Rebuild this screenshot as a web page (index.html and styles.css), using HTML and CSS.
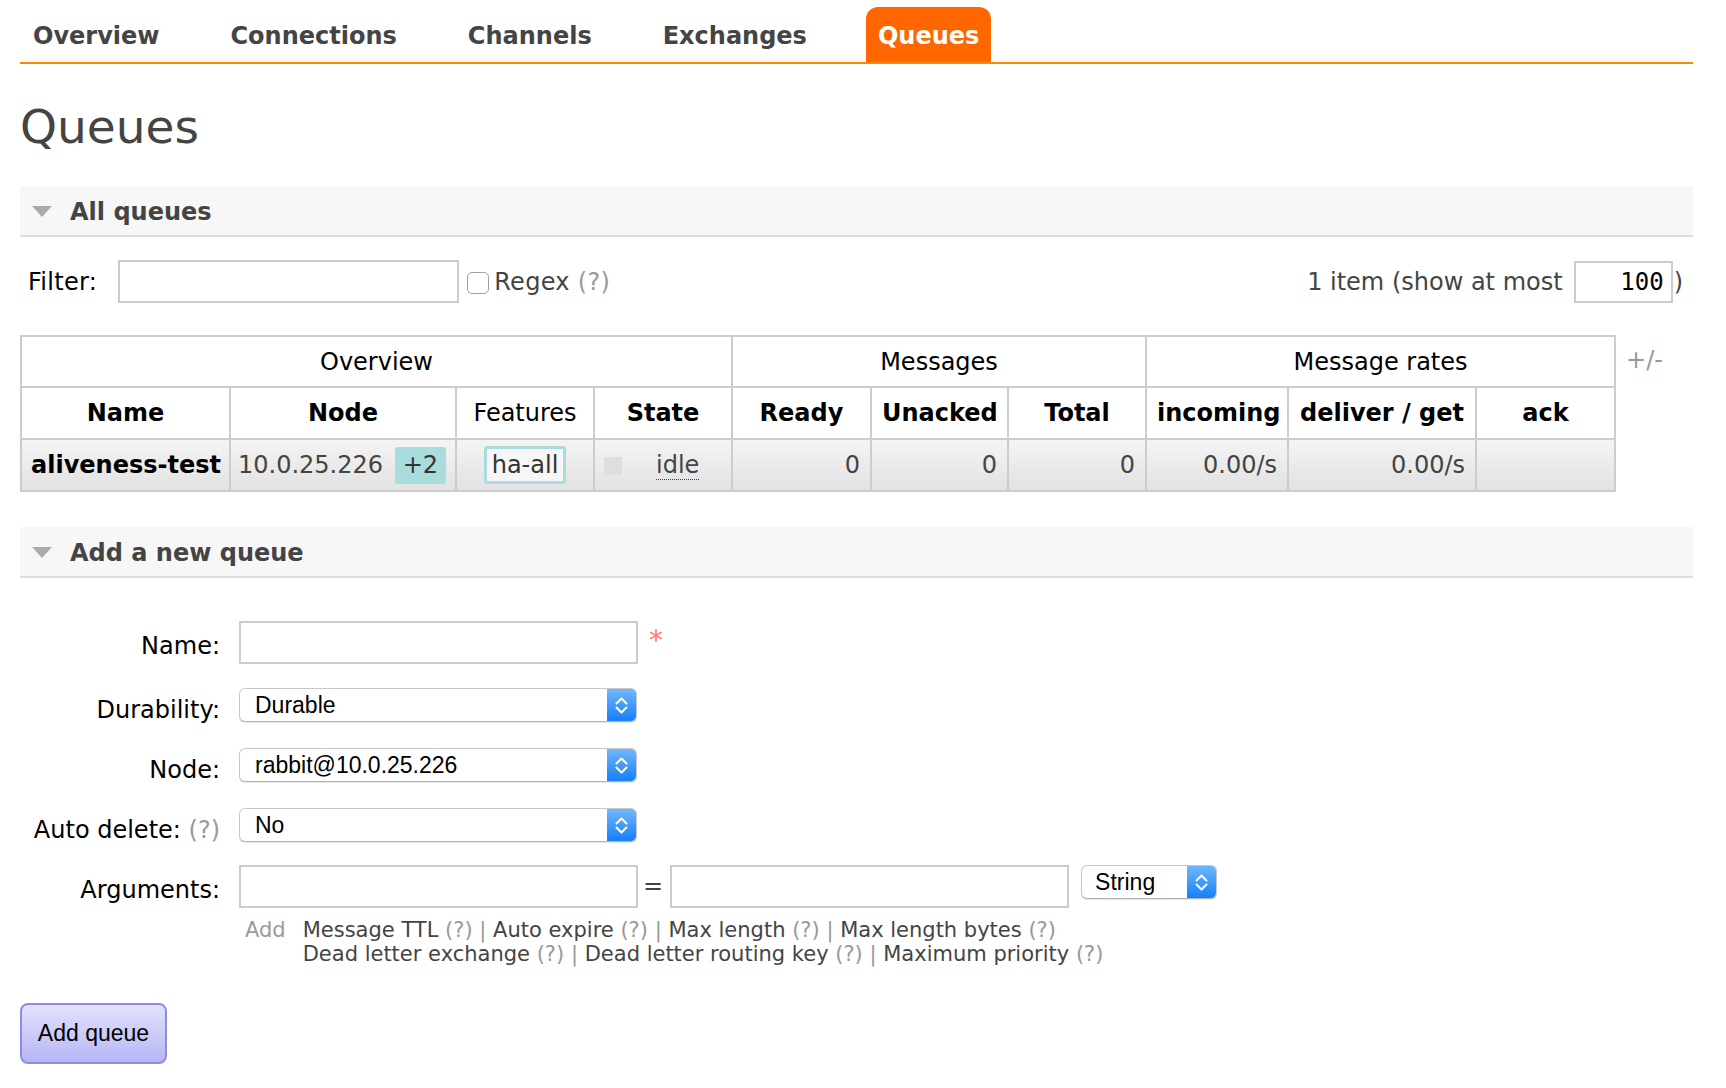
FILE: index.html
```html
<!DOCTYPE html>
<html lang="en">
<head>
<meta charset="utf-8">
<title>RabbitMQ Management - Queues</title>
<link rel="stylesheet" href="styles.css">
</head>
<body>
<nav class="menu">
  <ul class="tabs">
    <li><a href="#">Overview</a></li>
    <li><a href="#">Connections</a></li>
    <li><a href="#">Channels</a></li>
    <li><a href="#">Exchanges</a></li>
    <li><a href="#" class="selected">Queues</a></li>
  </ul>
</nav>

<main class="main">
  <h1 class="page-title">Queues</h1>

  <section class="section">
    <h2 class="section-head"><span class="tri"></span>All queues</h2>
    <div class="filter-row">
      <div class="filter-left">
        <label class="filter-label">Filter:</label>
        <input class="text-input filter-input" type="text">
        <input class="checkbox" type="checkbox">
        <span class="regex">Regex <span class="help">(?)</span></span>
      </div>
      <div class="filter-right">
        <span>1 item (show at most</span>
        <input class="text-input count-input" type="text" value="100">
        <span>)</span>
      </div>
    </div>

    <div class="table-row">
      <table class="list">
        <colgroup>
          <col class="c-name"><col class="c-node"><col class="c-feat"><col class="c-state">
          <col class="c-ready"><col class="c-unacked"><col class="c-total">
          <col class="c-in"><col class="c-deliver"><col class="c-ack">
        </colgroup>
        <thead>
          <tr class="group-row">
            <th colspan="4">Overview</th>
            <th colspan="3">Messages</th>
            <th colspan="3">Message rates</th>
          </tr>
          <tr class="head-row">
            <th>Name</th>
            <th>Node</th>
            <th class="plain">Features</th>
            <th>State</th>
            <th>Ready</th>
            <th>Unacked</th>
            <th>Total</th>
            <th>incoming</th>
            <th>deliver / get</th>
            <th>ack</th>
          </tr>
        </thead>
        <tbody>
          <tr class="data-row">
            <td class="cell-name">aliveness-test</td>
            <td class="cell-node">10.0.25.226 <span class="badge">+2</span></td>
            <td class="cell-feat"><span class="policy">ha-all</span></td>
            <td class="cell-state"><span class="state-box"></span><abbr class="state-text">idle</abbr></td>
            <td class="num">0</td>
            <td class="num">0</td>
            <td class="num">0</td>
            <td class="num">0.00/s</td>
            <td class="num">0.00/s</td>
            <td class="num"></td>
          </tr>
        </tbody>
      </table>
      <span class="toggle-cols">+/-</span>
    </div>
  </section>

  <section class="section section-add">
    <h2 class="section-head"><span class="tri"></span>Add a new queue</h2>
    <form class="queue-form">
      <div class="form-row row-text">
        <label class="form-label">Name:</label>
        <input class="text-input field" type="text">
        <span class="mand">*</span>
      </div>
      <div class="form-row">
        <label class="form-label">Durability:</label>
        <div class="select field-select"><span class="select-text">Durable</span><span class="stepper"><svg width="29" height="32" viewBox="0 0 29 32"><path d="M9.5 14.5 L14.5 9.5 L19.5 14.5 M9.5 18.5 L14.5 23.5 L19.5 18.5" fill="none" stroke="#fff" stroke-width="2" stroke-linecap="round" stroke-linejoin="round"/></svg></span></div>
      </div>
      <div class="form-row">
        <label class="form-label">Node:</label>
        <div class="select field-select"><span class="select-text">rabbit@10.0.25.226</span><span class="stepper"><svg width="29" height="32" viewBox="0 0 29 32"><path d="M9.5 14.5 L14.5 9.5 L19.5 14.5 M9.5 18.5 L14.5 23.5 L19.5 18.5" fill="none" stroke="#fff" stroke-width="2" stroke-linecap="round" stroke-linejoin="round"/></svg></span></div>
      </div>
      <div class="form-row row-auto">
        <label class="form-label">Auto delete: <span class="help">(?)</span></label>
        <div class="select field-select"><span class="select-text">No</span><span class="stepper"><svg width="29" height="32" viewBox="0 0 29 32"><path d="M9.5 14.5 L14.5 9.5 L19.5 14.5 M9.5 18.5 L14.5 23.5 L19.5 18.5" fill="none" stroke="#fff" stroke-width="2" stroke-linecap="round" stroke-linejoin="round"/></svg></span></div>
      </div>
      <div class="form-row row-text row-args">
        <label class="form-label">Arguments:</label>
        <input class="text-input field" type="text">
        <span class="eq">=</span>
        <input class="text-input field" type="text">
        <div class="select type-select"><span class="select-text">String</span><span class="stepper"><svg width="29" height="32" viewBox="0 0 29 32"><path d="M9.5 14.5 L14.5 9.5 L19.5 14.5 M9.5 18.5 L14.5 23.5 L19.5 18.5" fill="none" stroke="#fff" stroke-width="2" stroke-linecap="round" stroke-linejoin="round"/></svg></span></div>
      </div>
      <div class="arg-help">
        <span class="add-label">Add</span>
        <div class="arg-links">
          <div><a href="#">Message TTL</a> <span class="help">(?)</span> <span class="sep">|</span> <a href="#">Auto expire</a> <span class="help">(?)</span> <span class="sep">|</span> <a href="#">Max length</a> <span class="help">(?)</span> <span class="sep">|</span> <a href="#">Max length bytes</a> <span class="help">(?)</span></div>
          <div><a href="#">Dead letter exchange</a> <span class="help">(?)</span> <span class="sep">|</span> <a href="#">Dead letter routing key</a> <span class="help">(?)</span> <span class="sep">|</span> <a href="#">Maximum priority</a> <span class="help">(?)</span></div>
        </div>
      </div>
      <button class="submit" type="button">Add queue</button>
    </form>
  </section>
</main>
</body>
</html>
```

FILE: styles.css
```css
* { box-sizing: border-box; }

html, body {
  margin: 0;
  background: #fff;
}

body {
  font-family: "DejaVu Sans", Verdana, sans-serif;
  font-size: 24px;
  color: #444;
  padding: 0 33px 0 20px;
}

/* Tabs */
.tabs {
  list-style: none;
  margin: 7px 0 0;
  padding: 0 0 0 1px;
  display: flex;
  gap: 47px;
  border-bottom: 2px solid #f80;
}

.tabs a {
  display: block;
  height: 55px;
  padding: 3px 12px 0;
  line-height: 52px;
  font-weight: bold;
  color: #444;
  text-decoration: none;
  border-radius: 12px 12px 0 0;
}

.tabs a.selected {
  background: #f60;
  color: #fff;
}

/* Title */
.page-title {
  margin: 35px 0 31px;
  font-size: 47px;
  font-weight: normal;
  line-height: 56px;
  color: #444;
}

/* Section header */
.section-head {
  margin: 0;
  height: 51px;
  padding: 2px 0 0 12px;
  background: #f7f7f7;
  border-bottom: 2px solid #ddd;
  display: flex;
  align-items: center;
  font-size: 24px;
  font-weight: bold;
  color: #444;
}

.tri {
  width: 0;
  height: 0;
  border-left: 10px solid transparent;
  border-right: 10px solid transparent;
  border-top: 11px solid #aaa;
  margin-right: 18px;
}

.section-add {
  margin-top: 35px;
}

/* Filter */
.filter-row {
  display: flex;
  justify-content: space-between;
  align-items: center;
  margin-top: 23px;
  height: 43px;
  padding: 0 10px 0 8px;
}

.filter-left,
.filter-right {
  display: flex;
  align-items: center;
}

.filter-label {
  color: #000;
  margin-right: 21px;
  letter-spacing: 0.3px;
}

.text-input {
  border: 2px solid #ccc;
  background: #fff;
  font: inherit;
  margin: 0;
  padding: 0 8px;
  outline: none;
}

.filter-input {
  width: 341px;
  height: 43px;
}

.checkbox {
  appearance: none;
  -webkit-appearance: none;
  width: 22px;
  height: 22px;
  border: 1px solid #a0a0a0;
  border-radius: 5px;
  margin: 2px 5px 0 8px;
  background: #fff;
}

.regex {
  color: #444;
  letter-spacing: 0.3px;
}

.help {
  color: #999;
}

.count-input {
  width: 99px;
  height: 42px;
  margin: 0 1px 0 11px;
  padding: 0 7px 0 0;
  font-family: "DejaVu Sans Mono", monospace;
  font-size: 24px;
  text-align: right;
  color: #000;
}

/* Table */
.table-row {
  display: flex;
  align-items: flex-start;
  margin-top: 32px;
}

.list {
  border-collapse: collapse;
  table-layout: fixed;
  width: 1594px;
  flex: none;
}

.c-name { width: 209px; }
.c-node { width: 226px; }
.c-feat { width: 138px; }
.c-state { width: 138px; }
.c-ready { width: 139px; }
.c-unacked { width: 137px; }
.c-total { width: 138px; }
.c-in { width: 142px; }
.c-deliver { width: 188px; }
.c-ack { width: 139px; }

.list th,
.list td {
  border: 2px solid #ccc;
  padding: 0 10px;
  white-space: nowrap;
  overflow: hidden;
}

.list thead th {
  background: #fff;
  color: #000;
  text-align: center;
}

.group-row th {
  font-weight: normal;
  height: 51px;
}

.head-row th {
  font-weight: bold;
  height: 52px;
}

.head-row th.plain {
  font-weight: normal;
}

.data-row td {
  height: 52px;
  background: linear-gradient(#f4f4f4, #e2e2e2);
  color: #444;
}

.data-row td.cell-name {
  padding: 0 4px 0 9px;
  font-weight: bold;
  color: #000;
}

.data-row td.cell-node {
  padding: 0 4px 0 7px;
}

.badge {
  display: inline-block;
  margin-left: 4px;
  padding: 0 8px;
  height: 37px;
  line-height: 37px;
  background: #a9dcdc;
  border-radius: 3px;
  color: #333;
  vertical-align: middle;
}

.data-row td.cell-feat {
  text-align: center;
  padding: 0 4px;
}

.policy {
  display: inline-block;
  padding: 0 5px;
  height: 38px;
  line-height: 32px;
  border: 3px solid #a9dcdc;
  border-radius: 3px;
  background: #f6f6f6;
  color: #333;
  vertical-align: middle;
}

.data-row td.cell-state {
  padding: 0 4px 0 9px;
}

.state-box {
  display: inline-block;
  width: 18px;
  height: 18px;
  background: #dedede;
  vertical-align: middle;
}

.state-text {
  margin-left: 34px;
  text-decoration: none;
  border-bottom: 1px dotted #444;
  color: #444;
}

.data-row td.num {
  text-align: right;
  padding-right: 10px;
}

.toggle-cols {
  margin-left: 10px;
  line-height: 51px;
  color: #999;
}

/* Form */
.queue-form {
  padding-top: 43px;
}

.form-row {
  display: flex;
  align-items: flex-start;
  margin-bottom: 24px;
}

.row-auto {
  margin-bottom: 21px;
}

.row-args {
  margin-bottom: 10px;
}

.form-label {
  flex: none;
  width: 200px;
  margin-right: 19px;
  text-align: right;
  color: #000;
  line-height: 28px;
  padding-top: 8px;
}

.row-text .form-label {
  padding-top: 11px;
}

.field {
  width: 399px;
  height: 43px;
}

.mand {
  color: #f77;
  font-size: 28px;
  line-height: 28px;
  padding-top: 6px;
  margin-left: 11px;
}

.select {
  display: flex;
  align-items: center;
  height: 34px;
  border: 1px solid #c8c8c8;
  border-bottom-color: #b4b4b4;
  border-radius: 6px;
  background: #fff;
  box-shadow: 0 1px 1px rgba(0, 0, 0, 0.1);
  font-family: "Liberation Sans", Arial, sans-serif;
  font-size: 23px;
  color: #000;
  padding-left: 15px;
  overflow: hidden;
}

.field-select {
  width: 398px;
}

.type-select {
  width: 136px;
  margin-left: 12px;
  padding-left: 13px;
}

.select-text {
  flex: 1;
}

.stepper {
  flex: none;
  width: 29px;
  height: 100%;
  background: linear-gradient(#70b7fb, #1580fa);
  display: flex;
  align-items: center;
  justify-content: center;
}

.stepper svg {
  display: block;
}

.eq {
  margin: 0 7px 0 5px;
  line-height: 43px;
  color: #444;
}

.arg-help {
  display: flex;
  margin-left: 225px;
  font-size: 21px;
  line-height: 24px;
}

.add-label {
  color: #999;
  margin-right: 17px;
}

.arg-links a {
  color: #444;
  text-decoration: none;
}

.sep {
  color: #999;
}

.submit {
  display: block;
  margin-top: 37px;
  width: 147px;
  height: 61px;
  padding: 0;
  border: 2px solid #8c8ce0;
  border-radius: 8px;
  background: linear-gradient(#e2e2fc, #b6b6f6);
  font-family: "Liberation Sans", Arial, sans-serif;
  font-size: 23px;
  color: #000;
}
```
